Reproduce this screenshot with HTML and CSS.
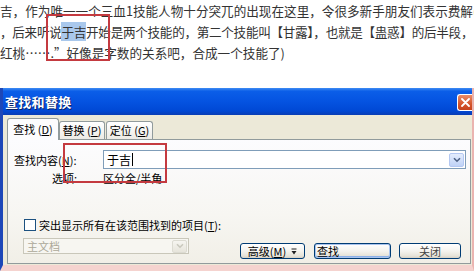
FILE: index.html
```html
<!DOCTYPE html>
<html lang="zh">
<head>
<meta charset="utf-8">
<title>查找和替换</title>
<link rel="stylesheet" href="styles.css">
</head>
<body>
<div class="page">
  <div class="doc">
    <p class="line">吉，作为唯一一个三血1技能人物十分突兀的出现在这里，令很多新手朋友们表示费解(</p>
    <p class="line tight">，后来听说<span class="hl">于吉</span>开始是两个技能的，第二个技能叫【甘露】，也就是【蛊惑】的后半段，</p>
    <p class="line">红桃…….”好像是字数的关系吧，合成一个技能了)</p>
  </div>

  <div class="dialog">
    <div class="titlebar">
      <span class="title">查找和替换</span>
      <span class="close">
        <svg width="9" height="9" viewBox="0 0 9 9"><path d="M1 1L8 8M8 1L1 8" stroke="#fff" stroke-width="1.8" stroke-linecap="round"/></svg>
      </span>
    </div>
    <div class="body">
      <div class="tabs">
        <div class="tab active">查找 (<u>D</u>)</div>
        <div class="tab t2">替换 (<u>P</u>)</div>
        <div class="tab t3">定位 (<u>G</u>)</div>
      </div>
      <div class="panel">
        <div class="find-row">
          <span class="lbl">查找内容(<u>N</u>):</span>
          <div class="combo">
            <span class="val">于吉<span class="caret"></span></span>
            <span class="arrow">
              <svg width="8" height="6" viewBox="0 0 8 6"><path d="M1 1.2L4 4.2L7 1.2" fill="none" stroke="#4d6185" stroke-width="1.6"/></svg>
            </span>
          </div>
        </div>
        <div class="opt-row">
          <span class="opt-lbl">选项:</span>
          <span class="opt-val">区分全/半角</span>
        </div>
        <div class="check-row">
          <span class="cb"></span>
          <span class="cb-text">突出显示所有在该范围找到的项目(<u>T</u>):</span>
        </div>
        <div class="bottom-row">
          <div class="select">
            <span class="sel-val">主文档</span>
            <span class="arrow dis">
              <svg width="8" height="6" viewBox="0 0 8 6"><path d="M1 1.2L4 4.2L7 1.2" fill="none" stroke="#c9c8bd" stroke-width="1.6"/></svg>
            </span>
          </div>
          <div class="buttons">
            <button class="btn btn-adv">高级(<u>M</u>)
              <svg class="more" width="6" height="7" viewBox="0 0 6 7"><path d="M0.5 1H5.5" stroke="#222" stroke-width="1"/><path d="M0.5 3H5.5L3 6.5Z" fill="#222"/></svg>
            </button>
            <button class="btn btn-find">查找</button>
            <button class="btn btn-close">关闭</button>
          </div>
        </div>
      </div>
    </div>
  </div>

  <div class="mark mark-doc"></div>
  <div class="mark mark-dlg"></div>
</div>
</body>
</html>
```

FILE: styles.css
```css
* { box-sizing: border-box; }

html, body {
  margin: 0;
  padding: 0;
  background: #fff;
}

.page {
  position: relative;
  width: 474px;
  height: 271px;
  overflow: hidden;
  font-family: "Noto Sans CJK SC", "Noto Sans", sans-serif;
}

/* ---------- document text ---------- */
.doc {
  height: 88px;
  color: #333;
  font-size: 12.6px;
}

.line {
  margin: 0;
  line-height: 21px;
  white-space: nowrap;
}

.line.tight {
  letter-spacing: -0.3px;
}

.hl {
  background: #a9c8ec;
}

/* ---------- dialog ---------- */
.dialog {
  width: 474px;
  height: 183px;
  border-left: 3px solid #1d47b8;
  border-right: 2px solid #eab4b0;
  border-bottom: 6px solid #f5d3cf;
  background: #ece9d8;
  display: flex;
  flex-direction: column;
}

.titlebar {
  height: 27px;
  display: flex;
  align-items: center;
  justify-content: space-between;
  padding-left: 2px;
  background: linear-gradient(to bottom, #3f8cf3 0%, #0b5ee8 12%, #0553e1 50%, #0048d4 85%, #0a3db4 100%);
}

.title {
  color: #fff;
  font-weight: bold;
  font-size: 13px;
  letter-spacing: 0.3px;
  text-shadow: 1px 1px 0 #0a246a;
}

.close {
  width: 15px;
  height: 17px;
  margin-top: 1px;
  border: 1px solid #fff;
  border-right: none;
  border-radius: 3px 0 0 3px;
  background: linear-gradient(to bottom, #ea8c68, #d4552c 60%, #c6421c);
  display: flex;
  align-items: center;
  justify-content: center;
}

.body {
  flex: 1;
  padding: 3px 1px 1px 4px;
  display: flex;
  flex-direction: column;
}

/* ---------- tabs ---------- */
.tabs {
  height: 21px;
  display: flex;
  align-items: flex-end;
  position: relative;
  z-index: 1;
}

.tab {
  height: 18px;
  border: 1px solid #919b9c;
  border-bottom: none;
  border-radius: 3px 3px 0 0;
  background: linear-gradient(to bottom, #ffffff, #ecebe5);
  font-size: 11px;
  line-height: 17px;
  text-align: center;
  color: #000;
  white-space: nowrap;
}

.tab.active {
  width: 52px;
  height: 22px;
  margin-bottom: -1px;
  line-height: 20px;
  background: #fcfcfe;
}

.tab.t2 {
  width: 46px;
}

.tab.t3 {
  width: 47px;
  margin-left: 1px;
}

/* ---------- panel ---------- */
.panel {
  height: 125px;
  border: 1px solid #919b9c;
  background: linear-gradient(to bottom, #fcfcfe 0%, #f7f6f2 60%, #f1efe7 100%);
  padding: 10px 4px 0 6px;
  font-size: 11px;
  color: #000;
  display: flex;
  flex-direction: column;
}

.find-row {
  display: flex;
  align-items: center;
  height: 19px;
}

.lbl {
  width: 89px;
  white-space: nowrap;
}

.combo {
  flex: 1;
  height: 19px;
  border: 1px solid #7f9db9;
  background: #fff;
  display: flex;
  align-items: center;
  justify-content: space-between;
  padding: 0 1px 0 3px;
  font-size: 12px;
}

.val {
  display: flex;
  align-items: center;
  line-height: 17px;
}

.caret {
  width: 1px;
  height: 13px;
  background: #000;
  margin-left: 1px;
}

.arrow {
  width: 15px;
  height: 14px;
  border: 1px solid #b4c8f2;
  border-radius: 2px;
  background: linear-gradient(to bottom, #e4edfd, #bfd2f7);
  display: flex;
  align-items: center;
  justify-content: center;
}

.opt-row {
  height: 18px;
  display: flex;
  align-items: center;
}

.opt-lbl {
  margin-left: 38px;
  width: 51px;
}

.check-row {
  margin-top: 31px;
  height: 14px;
  display: flex;
  align-items: center;
}

.cb {
  width: 12px;
  height: 12px;
  margin-left: 10px;
  margin-right: 3px;
  border: 1px solid #1c5180;
  background: #fff;
}

.cb-text {
  white-space: nowrap;
}

.bottom-row {
  margin-top: 6px;
  display: flex;
  align-items: flex-start;
}

.select {
  width: 166px;
  height: 16px;
  margin-left: 9px;
  border: 1px solid #c9c7ba;
  background: #f7f6f1;
  display: flex;
  align-items: center;
  justify-content: space-between;
  padding: 0 1px 0 3px;
  color: #aca899;
}

.arrow.dis {
  height: 13px;
  border-color: #dcdbd2;
  background: linear-gradient(to bottom, #f6f5f0, #e6e4db);
}

.buttons {
  margin-left: auto;
  margin-right: 5px;
  margin-top: 5px;
  display: flex;
}

.btn {
  height: 16px;
  padding: 0;
  border: 1px solid #003c74;
  border-radius: 3px;
  background: linear-gradient(to bottom, #ffffff 0%, #f4f3ee 50%, #e6e3d8 85%, #d6d0c5 100%);
  font-family: "Noto Sans CJK SC", "Noto Sans", sans-serif;
  font-size: 11px;
  line-height: 14px;
  color: #000;
  display: flex;
  align-items: center;
  justify-content: center;
}

.btn-adv {
  width: 65px;
}

.more {
  margin-left: 5px;
}

.btn-find {
  width: 77px;
  margin-left: 9px;
  justify-content: flex-start;
  padding-left: 2px;
  box-shadow: inset 0 0 0 1px #a9c4ee, inset 0 -1px 0 1px #8bb0e8;
}

.btn-close {
  width: 62px;
  margin-left: 8px;
  color: #444;
}

/* ---------- red annotation boxes ---------- */
.mark {
  position: absolute;
  border: 2px solid #c43a40;
}

.mark-doc {
  left: 46px;
  top: 14px;
  width: 64px;
  height: 47px;
}

.mark-dlg {
  left: 63px;
  top: 143px;
  width: 104px;
  height: 40px;
}
```
